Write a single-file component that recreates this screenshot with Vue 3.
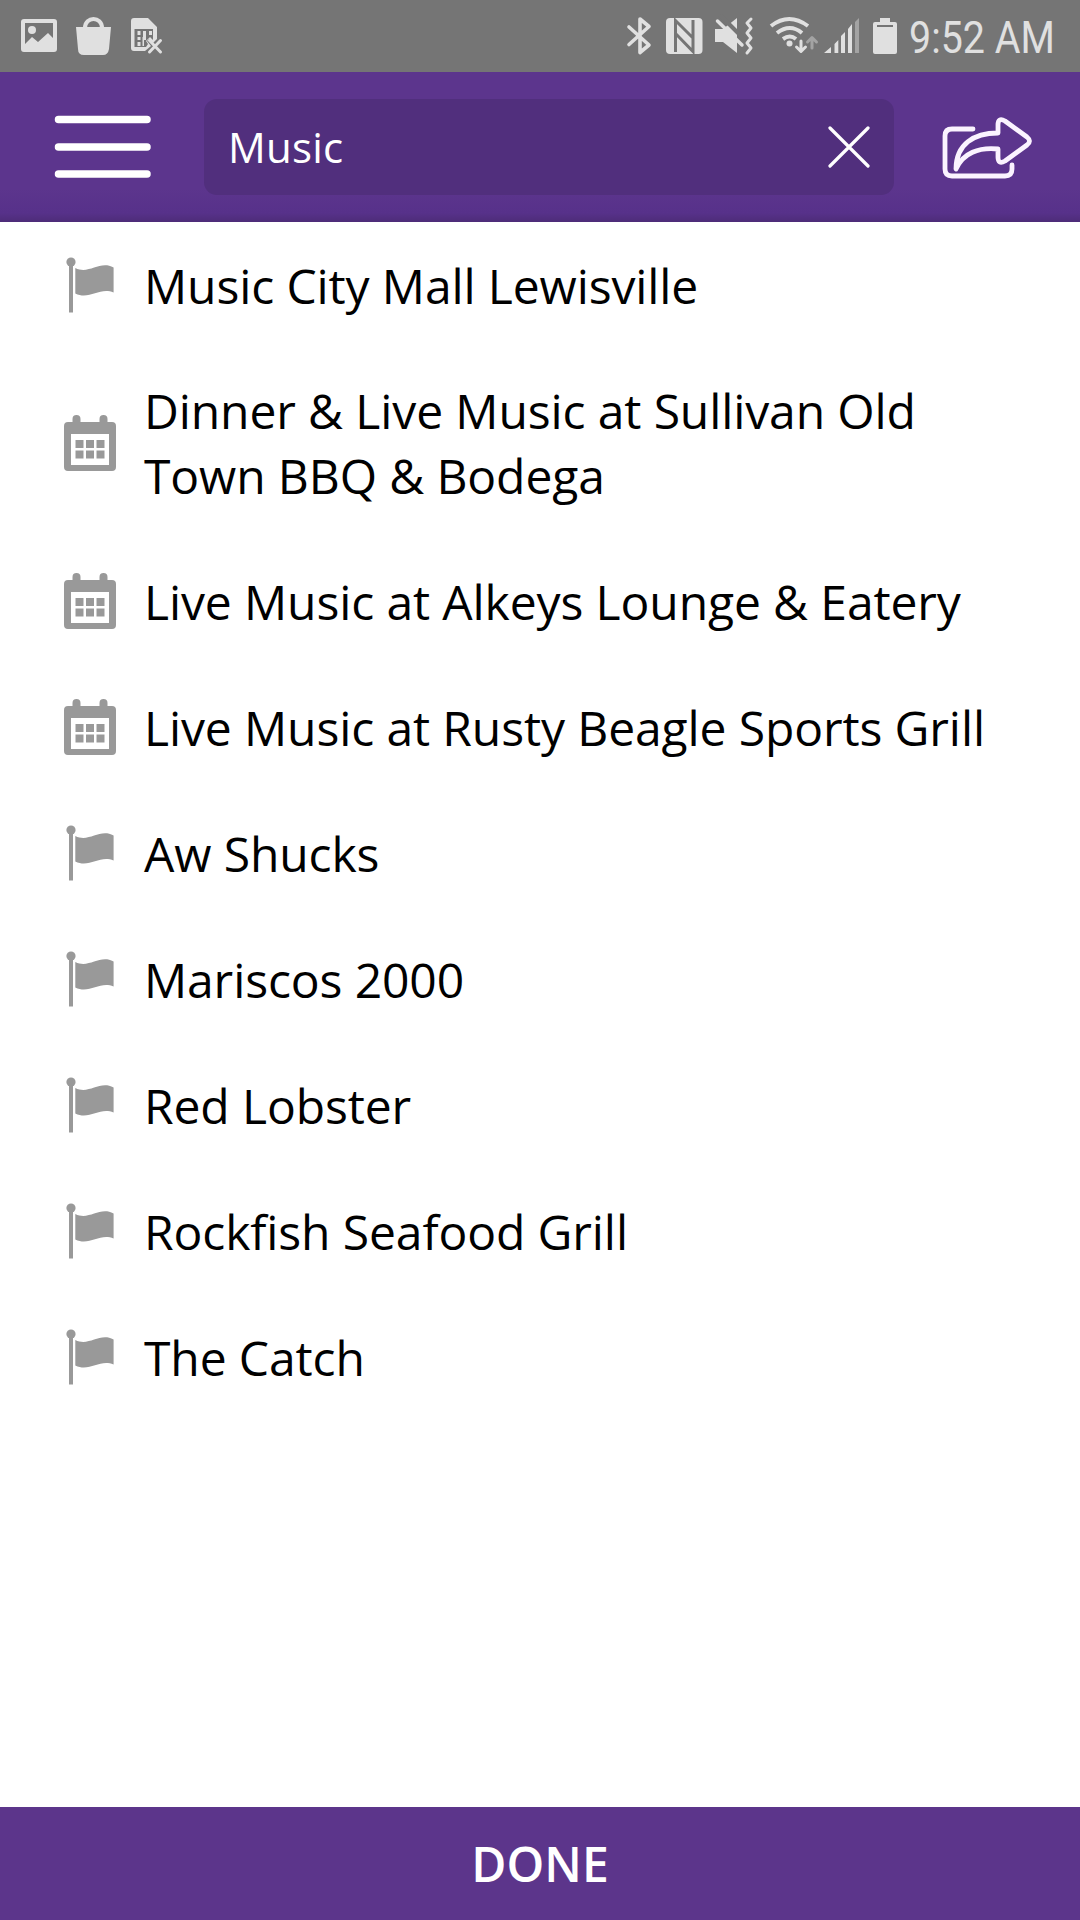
<script setup>
import { ref } from 'vue'

const query = ref('Music')

const results = ref([
  { type: 'place', name: 'Music City Mall Lewisville' },
  { type: 'event', name: 'Dinner & Live Music at Sullivan Old Town BBQ & Bodega' },
  { type: 'event', name: 'Live Music at Alkeys Lounge & Eatery' },
  { type: 'event', name: 'Live Music at Rusty Beagle Sports Grill' },
  { type: 'place', name: 'Aw Shucks' },
  { type: 'place', name: 'Mariscos 2000' },
  { type: 'place', name: 'Red Lobster' },
  { type: 'place', name: 'Rockfish Seafood Grill' },
  { type: 'place', name: 'The Catch' }
])

const clearQuery = () => {
  query.value = ''
}
</script>

<template>
  <div class="screen">
    <div class="status">
      <svg class="status_icons" width="180" height="72" viewBox="0 0 180 72">
        <path
          fill-rule="evenodd"
          d="M24 19h30q3 0 3 3v27q0 3-3 3H24q-3 0-3-3V22q0-3 3-3zM25 23v21l7-7 6 5 10-9 5 5V23z"
        />
        <circle cx="32" cy="30" r="4" />
        <path d="M76 27h35l-2 22q-1 6-6 6H84q-6 0-6-6z" />
        <path class="line" stroke-width="4" d="M85 28c0-12 17-12 17 0" />
        <path
          fill-rule="evenodd"
          d="M134 18h14l9 9v12l-4 4-4-4-2 2 4 5-6 5h-11q-3 0-3-3V21q0-3 3-3zM134.500 29v18H146l2-3-2-3 4-4 3 3V29z"
        />
        <path d="M137.500 31h3v4h-3zM137.500 37h3v3h-3zM137.500 42h3v4h-3zM143 31h3v9h-2v6h-1.500v-9H143zM149 31h3v4h-3z" />
        <path class="line" stroke-width="3" d="M149.500 40.500l11 11.500M160.500 40.500l-11 11.500" />
      </svg>
      <div class="status_right">
        <svg class="status_icons" width="280" height="72" viewBox="620 0 280 72">
          <path class="line" stroke-width="3.600" d="M629 27l20 18-9 7.500V19l9 7.500-20 18" />
          <rect x="666" y="18" width="36.500" height="36" rx="4" />
          <path class="cut" d="M675.500 52V20.500L693 38M693 20v31.500L676 34" />
          <path d="M715 29h8l14-11v35l-14-11h-8z" />
          <path class="cut wide" d="M720 15l28 28" />
          <path class="line" stroke-width="3.500" d="M717.500 21l24.500 24" stroke-linecap="butt" />
          <path class="line" stroke-width="3" d="M751 19l-4 4 4 5-4 5 4 5-4 5 4 5-4 5" />
          <path class="line thick" d="M771 26q18-14 37 0M777 33q13-10 25 0M783 39q7-5 13 0" />
          <circle cx="789.500" cy="43.500" r="3" />
          <path class="line" stroke-width="3" d="M801 41v10M796.500 47l4.500 4.500 4.500-4.500" />
          <path class="line faint" stroke-width="3" d="M812 48V38M807.500 42l4.500-4.500 4.500 4.500" />
          <path d="M824 53l7-6v6zM834.500 44l3.800-4v13h-3.800zM841 36l4-4v21h-4zM848 29l4-5v29h-4z" />
          <path class="fade" d="M855 22l4-4v35h-4z" />
          <path
            fill-rule="evenodd"
            d="M880 18h10v4h5q2 0 2 2v28q0 2-2 2h-20q-2 0-2-2V24q0-2 2-2h5zM877 25v2h16v-2z"
          />
        </svg>
        <div class="clock"><span>9:52 AM</span></div>
      </div>
    </div>

    <header class="header">
      <svg class="menu" width="98" height="64" viewBox="0 0 98 64">
        <path d="M4.500 5.500h88.500M4.500 33H93M4.500 60H93" />
      </svg>
      <div class="search">
        <span class="search_text">{{ query }}</span>
        <svg class="clear" width="42" height="42" viewBox="0 0 42 42" @click="clearQuery">
          <path d="M2 2l38 38M40 2L2 40" />
        </svg>
      </div>
      <svg class="share" width="92" height="64" viewBox="0 0 92 64">
        <path
          d="M32 13H11q-7 0-7 7v33q0 7 7 7h53q7 0 7-7v-4M15 53C15 28 33 17 57 17V9q0-8 7-4l22 16q5 4 0 8L64 45q-7 4-7-4v-8C38 31 22 37 15 53z"
        />
      </svg>
    </header>

    <ul class="results">
      <li v-for="item in results" :key="item.name" class="result">
        <svg v-if="item.type === 'place'" class="result_icon" viewBox="0 0 52 56">
          <circle cx="7" cy="5" r="4.600" />
          <path d="M5 7h4v48.500H5z" />
          <path d="M11.300 11c14 7 24-8 38.300-.5v25c-14-6-24 8-38.300 1z" />
        </svg>
        <svg v-else class="result_icon" viewBox="0 0 52 56">
          <path
            fill-rule="evenodd"
            d="M4 7h4.500V4q0-4 4-4t4 4v3h19V4q0-4 4-4t4 4v3H48q4 0 4 4v41q0 4-4 4H4q-4 0-4-4V11q0-4 4-4zM7 19v31h38V19z"
          />
          <path
            d="M11.500 25h8v8h-8zM22 25h8v8h-8zM32.500 25h8v8h-8zM11.500 35.500h8v8h-8zM22 35.500h8v8h-8zM32.500 35.500h8v8h-8z"
          />
        </svg>
        <span>{{ item.name }}</span>
      </li>
    </ul>

    <button class="done">DONE</button>
  </div>
</template>

<style>
body {
  margin: 0;
}
</style>

<style scoped>
.screen {
  display: flex;
  flex-direction: column;
  width: 1080px;
  height: 1920px;
  overflow: hidden;
  background: #fff;
  font-family: 'Open Sans', 'Noto Sans', sans-serif;
}

.status {
  display: flex;
  justify-content: space-between;
  flex: none;
  height: 72px;
  background: #757575;
}

.status_right {
  display: flex;
}

.status_icons {
  fill: #e0e0e0;
}

.line {
  fill: none;
  stroke: #e0e0e0;
  stroke-linecap: round;
  stroke-linejoin: round;
}

.thick {
  stroke-width: 4;
  stroke-linecap: butt;
}

.cut {
  fill: none;
  stroke: #757575;
  stroke-width: 3;
}

.wide {
  stroke-width: 4;
}

.faint {
  stroke: #a3a3a3;
}

.fade {
  fill: #a3a3a3;
}

.clock {
  width: 171px;
  margin-left: 9px;
  color: #e0e0e0;
  font-family: Roboto, sans-serif;
  font-size: 45px;
  line-height: 75px;
  white-space: nowrap;
}

.clock span {
  display: inline-block;
  transform: scaleX(0.875);
  transform-origin: left;
}

.header {
  display: flex;
  align-items: center;
  flex: none;
  box-sizing: border-box;
  height: 150px;
  padding: 0 47px 3px 54px;
  background: linear-gradient(#5c358d 78%, #57318a 94%, #4d2c78);
}

.menu {
  fill: none;
  stroke: #fff;
  stroke-width: 7.5;
  stroke-linecap: round;
}

.search {
  display: flex;
  align-items: center;
  justify-content: space-between;
  box-sizing: border-box;
  width: 690px;
  height: 96px;
  margin: 3px 47px 0 52px;
  padding: 0 24px;
  border-radius: 13px;
  background: #512f7d;
}

.search_text {
  padding-bottom: 2px;
  color: #fff;
  font-size: 42px;
  letter-spacing: 0.2px;
}

.clear {
  fill: none;
  stroke: #fff;
  stroke-width: 3.2;
  stroke-linecap: round;
}

.share {
  margin-top: 4px;
  fill: none;
  stroke: #fbf3ff;
  stroke-width: 4.8;
  stroke-linecap: round;
  stroke-linejoin: round;
}

.results {
  flex: 1;
  margin: 0;
  padding: 0;
  list-style: none;
}

.result {
  display: flex;
  align-items: center;
  gap: 28px;
  padding: 30.5px 80px 30.5px 64px;
  color: #000;
  font-size: 48px;
  line-height: 65px;
  letter-spacing: -0.11px;
}

.result:first-child {
  padding-bottom: 29.5px;
}

.result_icon {
  flex: none;
  width: 52px;
  height: 56px;
  fill: #999;
}

.done {
  flex: none;
  height: 113px;
  padding: 0;
  border: none;
  background: #5c358b;
  color: #fff;
  font-family: inherit;
  font-size: 48px;
  font-weight: 600;
}
</style>
